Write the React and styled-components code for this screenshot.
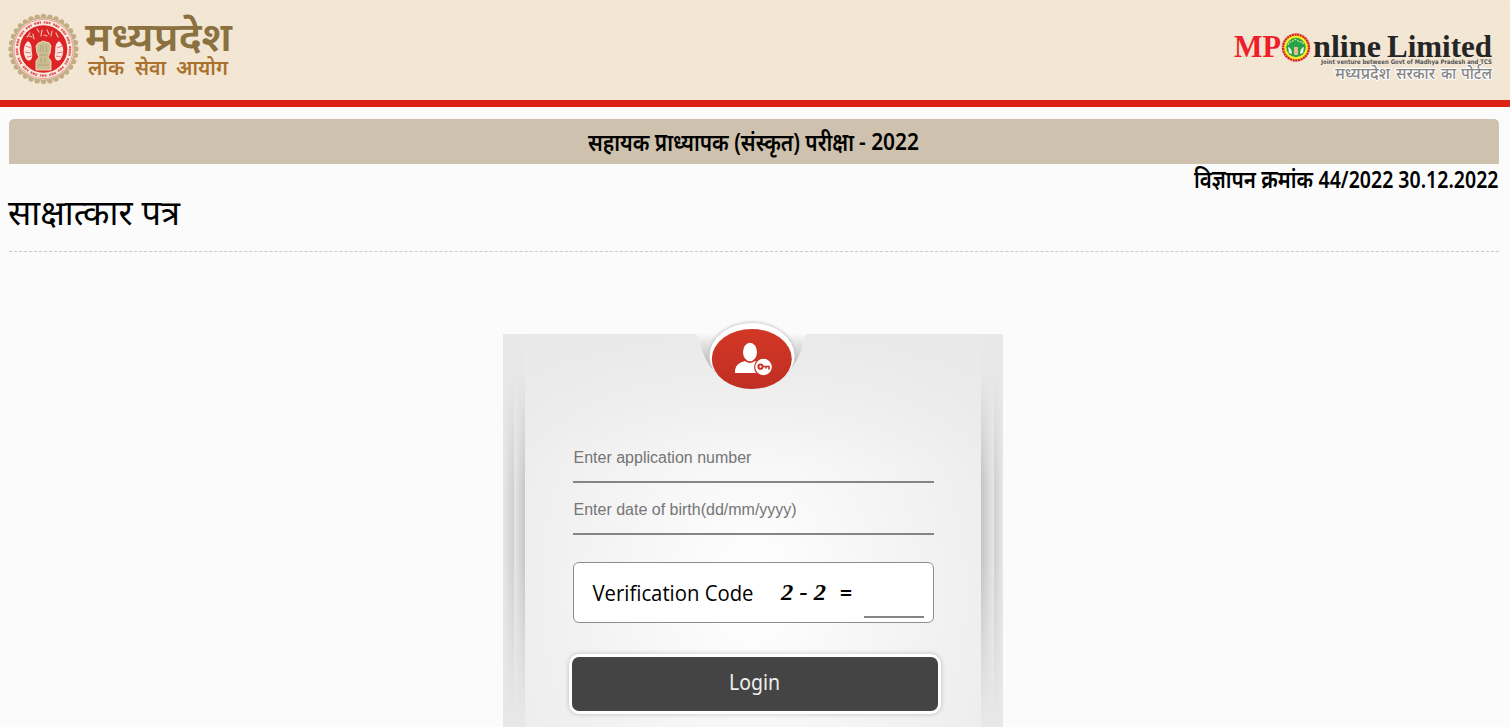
import { useState } from "react";
import styled, { createGlobalStyle } from "styled-components";

const GlobalStyle = createGlobalStyle`
  * {
    box-sizing: border-box;
  }
  body {
    margin: 0;
    background: #fbfbfb;
    color: #000;
    font-family: "Noto Sans", "Open Sans", sans-serif;
    overflow: hidden;
  }
`;

const Page = styled.div`
  height: 727px;
  overflow: hidden;
`;

const Header = styled.header`
  height: 107px;
  display: flex;
  justify-content: space-between;
  border-bottom: 7px solid #dc2115;
  background-color: #f2e5d2;
  background-image: repeating-linear-gradient(
    135deg,
    rgba(255, 255, 255, 0.08) 0 2px,
    transparent 2px 5px
  );
`;

const Logo = styled.svg`
  display: block;
  height: 100px;
  width: ${(p) => p.$width}px;
`;

const Content = styled.main`
  padding: 12px 11px 0 9px;
`;

const TitleBar = styled.div`
  height: 45px;
  display: flex;
  align-items: center;
  justify-content: center;
  border-radius: 5px 5px 0 0;
  background: #cec2ae;
`;

const Line = styled.svg`
  display: block;
  overflow: visible;
  width: ${(p) => p.$width}px;
  height: ${(p) => p.$height}px;
`;

const Notice = styled.div`
  display: flex;
  justify-content: flex-end;
  height: 30px;
`;

const PageTitle = styled.div`
  height: 58px;
  border-bottom: 1px dashed #c9cac2;
`;

const Card = styled.section`
  position: relative;
  display: grid;
  grid-template-columns: 11px 11px 456px 13px 9px;
  width: 500px;
  height: 430px;
  margin: 82px auto 0 494px;
  background: #e8e8e8;
`;

const Fold = styled.div`
  background: linear-gradient(
    to ${(p) => p.$to},
    #e7e7e7,
    ${(p) => p.$shade}
  );
  mask-image: linear-gradient(
    transparent 40px,
    #000 150px,
    #000 230px,
    transparent 385px
  );
`;

const Panel = styled.div`
  display: flex;
  flex-direction: column;
  padding: 98px 44px 0 45px;
  background:
    linear-gradient(rgba(232, 232, 232, 0.8), rgba(232, 232, 232, 0) 130px),
    radial-gradient(ellipse 270px 350px at 50% 255px, #fff, #f5f5f5 50%, #ececec);
`;

const Badge = styled.svg`
  position: absolute;
  left: 187px;
  top: -20px;
  width: 126px;
  height: 80px;
`;

const Field = styled.input`
  width: 361px;
  height: ${(p) => p.$height}px;
  margin-left: 3px;
  padding: ${(p) => p.$top}px 0 0 0.5px;
  border: 0;
  border-bottom: 2px solid #858585;
  border-radius: 0;
  outline: 0;
  background: transparent;
  font: 16px "Liberation Sans", Arial, sans-serif;
  &::placeholder {
    color: #757575;
  }
`;

const CodeBox = styled.div`
  display: flex;
  width: 361px;
  height: 61px;
  margin: 27px 0 0 3px;
  padding: 0 9px 0 19px;
  border: 1px solid #8d8d8d;
  border-radius: 6px;
  background: #fff;
`;

const CodeInput = styled.input`
  width: 60px;
  height: 55px;
  margin-left: auto;
  padding: 0;
  border: 0;
  border-bottom: 2px solid #858585;
  background: transparent;
`;

const LoginButton = styled.button`
  display: flex;
  width: 372px;
  height: 60px;
  margin: 31px 0 0 -1.5px;
  padding: 0;
  border: 3px solid #fff;
  border-radius: 10px;
  box-shadow: 0 0 5px rgba(0, 0, 0, 0.22);
  background: #444;
  font-family: "Noto Sans", "Open Sans", sans-serif;
`;

const Label = ({ x, y, width, size, children, ...rest }) => (
  <text
    x={x}
    y={y}
    fontSize={size}
    textLength={width}
    lengthAdjust="spacingAndGlyphs"
    {...rest}
  >
    {children}
  </text>
);

const scallops = Array.from({ length: 32 }, (_, i) => {
  const a = (i * Math.PI) / 16;
  return [43.5 + 32.5 * Math.cos(a), 49 + 32.5 * Math.sin(a)];
});

const CommissionLogo = () => (
  <Logo $width={250} viewBox="0 0 250 100">
    {scallops.map(([cx, cy]) => (
      <circle key={`${cx}-${cy}`} cx={cx} cy={cy} r="2.7" fill="#c4ad85" />
    ))}
    <circle cx="43.5" cy="49" r="32" fill="#c4ad85" />
    <circle cx="43.5" cy="49" r="30.5" fill="#f8e9df" />
    <circle
      cx="43.5"
      cy="49"
      r="29.6"
      fill="none"
      stroke="#e48a80"
      strokeWidth="0.8"
    />
    <circle
      cx="43.5"
      cy="49"
      r="26.6"
      fill="none"
      stroke="#df5451"
      strokeWidth="2.2"
      strokeDasharray="1.8 .6 2.2 .6 1.6 2.8"
    />
    <circle cx="43.5" cy="49" r="23.8" fill="#dc2426" />
    <g fill="none" stroke="#f3b9ad" strokeWidth="1.2" strokeLinecap="round">
      <path d="m27 37 3-4m3 1 1 5m3-10 2 3m3-2-1 6m6-6 2 4m3-3-1 5m5-3 2 4m-29-1 3 1m12-2 3 1" />
    </g>
    <g fill="#f9e6dd">
      <path d="M28 41c-5 4-6 13-1 19 4 2 6-2 5-7-1-5 1-8-4-12Z" />
      <path d="M59 41c5 4 6 13 1 19-4 2-6-2-5-7 1-5-1-8 4-12Z" />
    </g>
    <path
      fill="none"
      stroke="#e4585a"
      strokeWidth=".8"
      d="m26 46 5 2m-6 4 6 1m-4 4 5-1m30-10-5 2m6 4-6 1m4 4-5-1"
    />
    <path
      fill="#c9bd91"
      stroke="#f0dfc0"
      strokeWidth=".9"
      d="M36 46q2-4 5-4l2-1 3 1q4 0 5 4l-1 7-2 4 3 4v9H36v-9l3-4-2-4Z"
    />
    <path
      d="M41 45l-1 7m3-7v7m3-7 1 7M40 55h7M41 58v5m4-5v5M38 65h11"
      stroke="#aaa078"
      strokeWidth=".8"
      fill="none"
    />
    <Label x="85" y="50.5" width="147" size="40" fontWeight="600" fill="#8b713f">
      मध्यप्रदेश
    </Label>
    <g fontWeight="600" fill="#a9712d">
      <Label x="88" y="74.5" width="36" size="20.5">
        लोक
      </Label>
      <Label x="135" y="74.5" width="31" size="20.5">
        सेवा
      </Label>
      <Label x="176" y="74.5" width="52" size="20.5">
        आयोग
      </Label>
    </g>
  </Logo>
);

const PortalLogo = () => (
  <Logo
    $width={300}
    viewBox="0 0 300 100"
    fontFamily='"Liberation Serif", serif'
    fontWeight="700"
  >
    <Label x="24" y="56.5" width="47" size="32" fill="#ec1f2a">
      MP
    </Label>
    <Label x="103" y="56.5" width="68" size="32" fill="#252525">
      nline
    </Label>
    <Label x="177" y="56.5" width="105" size="32" fill="#252525">
      Limited
    </Label>
    <circle cx="86" cy="47.5" r="13" fill="#f4ed28" />
    <circle
      cx="86"
      cy="47.5"
      r="13"
      fill="none"
      stroke="#d92328"
      strokeWidth="2.4"
      strokeDasharray="2.2 .5"
    />
    <circle cx="86" cy="47.5" r="9.7" fill="#27a14a" />
    <path
      d="M78 45q1-4 4-3 3-5 7 0 4-1 5 3"
      stroke="#c8e88c"
      strokeWidth="1.3"
      strokeDasharray="2 1"
      fill="none"
    />
    <path d="M78 47q4 1 4 7l-3-1Zm16 0q-4 1-4 7l3-1Z" fill="#e2f4e9" />
    <path d="M84 47h4v8h-4Z" fill="#e5bd8f" />
    <g
      fontFamily='"Noto Sans", sans-serif'
      fontWeight="500"
      fill="#858585"
      stroke="#fff"
      strokeWidth="2"
      paintOrder="stroke"
    >
      <Label x="125" y="78.5" width="55" size="15.5">
        मध्यप्रदेश
      </Label>
      <Label x="186" y="78.5" width="39" size="15.5">
        सरकार
      </Label>
      <Label x="231" y="78.5" width="15" size="15.5">
        का
      </Label>
      <Label x="251" y="78.5" width="31" size="15.5">
        पोर्टल
      </Label>
    </g>
    <Label
      x="111"
      y="63.8"
      width="171"
      size="6.3"
      fontFamily='"DejaVu Sans", sans-serif'
      fill="#555"
    >
      Joint venture between Govt of Madhya Pradesh and TCS
    </Label>
  </Logo>
);

const UserBadge = () => (
  <Badge viewBox="690 314 126 80">
    <defs>
      <linearGradient id="notch" x1="0" y1="0" x2="0" y2="1">
        <stop offset="0" stopColor="#fbfbfb" />
        <stop offset=".35" stopColor="#dcdcdc" />
        <stop offset="1" stopColor="#aaa" />
      </linearGradient>
      <linearGradient id="red" x1="0" y1="0" x2="0" y2="1">
        <stop offset="0" stopColor="#d33726" />
        <stop offset="1" stopColor="#bf2f23" />
      </linearGradient>
      <filter id="soft">
        <feGaussianBlur stdDeviation="1.5" />
      </filter>
      <clipPath id="pocket">
        <path d="M690 314H816V333H809Q804 336 803 343Q799 361 788 372H715Q704 361 700 343Q699 336 694 333H690Z" />
      </clipPath>
    </defs>
    <g clipPath="url(#pocket)">
      <path d="M690 333H816V374H690Z" fill="url(#notch)" />
      <ellipse
        cx="752"
        cy="357"
        rx="44"
        ry="35"
        fill="#c8c8c8"
        filter="url(#soft)"
      />
      <ellipse cx="752" cy="356" rx="42.5" ry="33" fill="#fff" />
    </g>
    <ellipse cx="751.8" cy="359" rx="40" ry="30" fill="url(#red)" />
    <ellipse cx="750" cy="352" rx="7" ry="9.2" fill="#fff" />
    <path
      d="M735 373v-3q1-6 7-8l3-1q5 4 10 0 9 2 10 12Z"
      fill="#fff"
    />
    <circle
      cx="763.5"
      cy="367"
      r="8.9"
      fill="#fff"
      stroke="#c83425"
      strokeWidth="1.2"
    />
    <circle
      cx="760.5"
      cy="366.7"
      r="2.1"
      fill="none"
      stroke="#c83425"
      strokeWidth="2"
    />
    <path
      d="M763 366.5h6v3m-3-3v2"
      stroke="#c83425"
      strokeWidth="1.6"
      fill="none"
    />
  </Badge>
);

const App = () => {
  const [form, setForm] = useState({ number: "", birth: "", code: "" });
  const update = (e) => setForm({ ...form, [e.target.name]: e.target.value });

  return (
    <Page>
      <GlobalStyle />
      <Header>
        <CommissionLogo />
        <PortalLogo />
      </Header>
      <Content>
        <TitleBar>
          <Line $width={332} $height={45}>
            <Label x="0" y="31.5" width="266" size="24.5" fontWeight="600">
              सहायक प्राध्यापक (संस्कृत) परीक्षा
            </Label>
            <Label x="271" y="31" width="60" size="23" fontWeight="600">
              - 2022
            </Label>
          </Line>
        </TitleBar>
        <Notice>
          <Line $width={305} $height={30}>
            <Label x="0" y="23.5" width="119" size="24.5" fontWeight="600">
              विज्ञापन क्रमांक
            </Label>
            <Label x="124.5" y="23.5" width="180" size="23" fontWeight="600">
              44/2022 30.12.2022
            </Label>
          </Line>
        </Notice>
        <PageTitle>
          <Line $width={174} $height={50}>
            <Label x="-1" y="31" width="172" size="35">
              साक्षात्कार पत्र
            </Label>
          </Line>
        </PageTitle>
        <Card>
          <Fold $to="right" $shade="#cfcfcf" />
          <Fold $to="right" $shade="#c6c6c6" />
          <Panel>
            <Field
              name="number"
              value={form.number}
              onChange={update}
              placeholder="Enter application number"
              $height={51}
              $top={2}
            />
            <Field
              name="birth"
              value={form.birth}
              onChange={update}
              placeholder="Enter date of birth(dd/mm/yyyy)"
              $height={52}
              $top={4}
            />
            <CodeBox>
              <Line $width={262} $height={59}>
                <Label
                  x="-0.5"
                  y="38"
                  width="161"
                  size="22.5"
                  fontFamily='"Open Sans", sans-serif'
                >
                  Verification Code
                </Label>
                <Label
                  x="188"
                  y="37"
                  width="45"
                  size="23"
                  fontFamily='"Liberation Serif", serif'
                  fontStyle="italic"
                  fontWeight="700"
                >
                  2 - 2
                </Label>
                <Label x="247" y="37" width="12" size="20" fontWeight="700">
                  =
                </Label>
              </Line>
              <CodeInput name="code" value={form.code} onChange={update} />
            </CodeBox>
            <LoginButton>
              <Line $width={366} $height={54}>
                <Label x="157" y="33" width="51" size="22" fill="#eee">
                  Login
                </Label>
              </Line>
            </LoginButton>
          </Panel>
          <Fold $to="left" $shade="#c4c4c4" />
          <Fold $to="left" $shade="#cecece" />
          <UserBadge />
        </Card>
      </Content>
    </Page>
  );
};

export default App;
